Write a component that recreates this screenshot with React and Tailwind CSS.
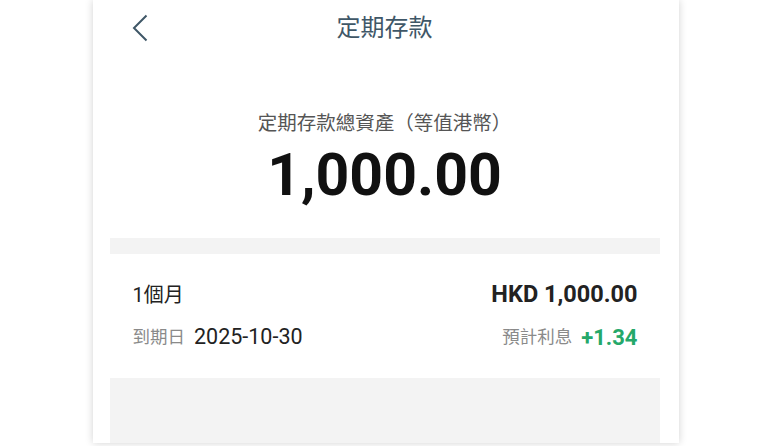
export default function App() {
  return (
    <div
      className="w-full h-[446px] bg-white overflow-hidden flex justify-center"
      style={{ fontFamily: 'Roboto, "Noto Sans CJK TC", sans-serif' }}
    >
      <div className="w-[586px] h-[443px] bg-white shadow-[0_0_8px_rgba(0,0,0,0.18)] flex flex-col pl-[17px] pr-[19px]">
        {/* Header */}
        <div className="h-[56px] flex items-center relative shrink-0">
          <svg
            className="ml-[22px] text-[#3f5767]"
            width="16"
            height="28"
            viewBox="0 0 16 28"
            fill="none"
            stroke="currentColor"
            strokeWidth="2"
          >
            <path d="M14.5 1.5L2 14l12.5 12.5" />
          </svg>
          <div className="absolute inset-0 flex items-center justify-center text-[24px] text-[#3f5767]">
            定期存款
          </div>
        </div>

        {/* Summary */}
        <div className="flex flex-col items-center pt-[55px] pb-[34px]">
          <div className="text-[19.5px] leading-[26px] text-[#555]">
            定期存款總資產（等值港幣）
          </div>
          <div className="mt-[9px] text-[59px] leading-[58px] font-bold text-[#111]">
            1,000.00
          </div>
        </div>

        <div className="h-[16px] bg-[#f3f3f3] shrink-0" />

        {/* Deposit row */}
        <div className="pl-[23px] pr-[22px] py-[27px] flex flex-col gap-[14px]">
          <div className="flex items-center justify-between h-[28px]">
            <span className="text-[20px] text-[#222]">1個月</span>
            <span className="text-[23.5px] font-bold text-[#222]">HKD 1,000.00</span>
          </div>
          <div className="flex items-center justify-between h-[28px]">
            <div className="flex items-center gap-[9px]">
              <span className="text-[17.5px] text-[#8a8a8a]">到期日</span>
              <span className="text-[21.5px] text-[#222]">2025-10-30</span>
            </div>
            <div className="flex items-center gap-[9px]">
              <span className="text-[17.5px] text-[#8a8a8a]">預計利息</span>
              <span className="text-[22px] font-bold text-[#25a86a]">+1.34</span>
            </div>
          </div>
        </div>

        <div className="flex-1 bg-[#f3f3f3]" />
      </div>
    </div>
  );
}
